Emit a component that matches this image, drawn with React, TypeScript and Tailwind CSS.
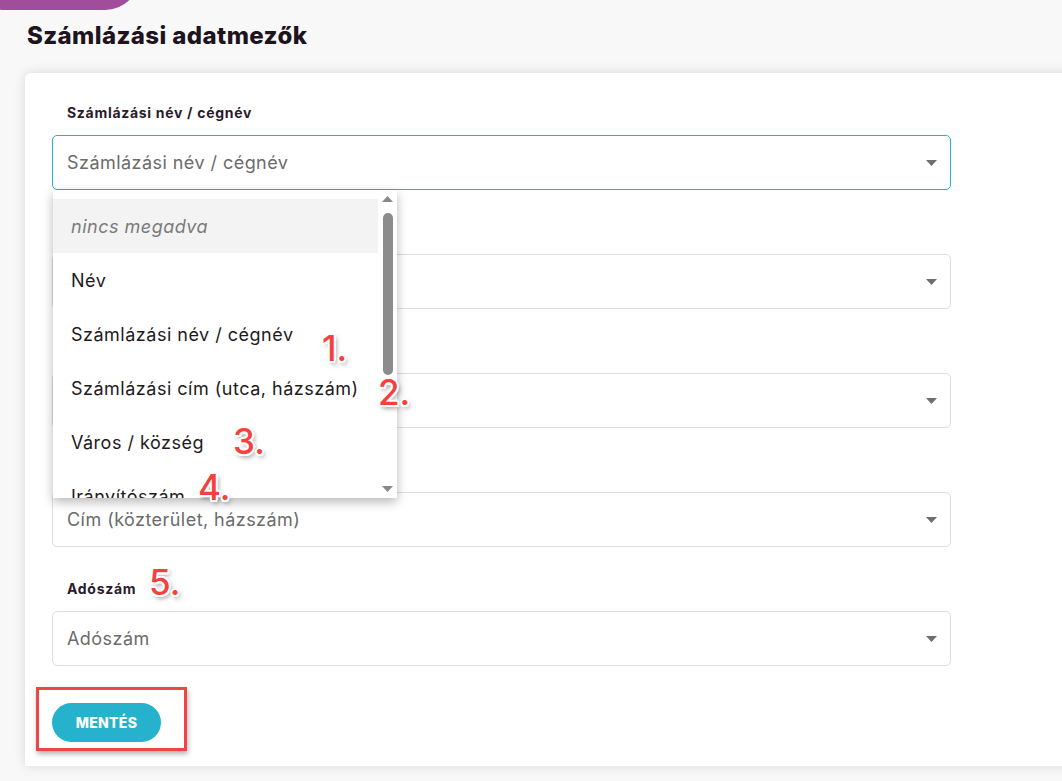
import React from "react";

const font = { fontFamily: "Inter, 'Noto Sans', sans-serif" };

const options = [
  "nincs megadva",
  "Név",
  "Számlázási név / cégnév",
  "Számlázási cím (utca, házszám)",
  "Város / község",
  "Irányítószám",
];

function Caret() {
  return (
    <svg width="11" height="6" viewBox="0 0 11 6" className="shrink-0">
      <path d="M0 0h11L5.5 6z" fill="#6e6e6e" />
    </svg>
  );
}

function Mark({ n, className }: { n: string; className: string }) {
  return (
    <span
      className={`pointer-events-none absolute z-20 text-[35px] font-medium leading-none text-[#f2413f] ${className}`}
      style={{
        fontFamily: "Inter, 'Liberation Sans', sans-serif",
        textShadow:
          "2px 0 0 #fff,-2px 0 0 #fff,0 2px 0 #fff,0 -2px 0 #fff,1.5px 1.5px 0 #fff,-1.5px -1.5px 0 #fff,1.5px -1.5px 0 #fff,-1.5px 1.5px 0 #fff,2px 3px 5px rgba(0,0,0,0.5)",
      }}
    >
      {n}
    </span>
  );
}

function Field({
  label,
  placeholder,
  active,
  children,
}: {
  label?: string;
  placeholder: string;
  active?: boolean;
  children?: React.ReactNode;
}) {
  return (
    <div className="mb-[32px]">
      <div className="h-[20px] pl-[15px] text-[14px] font-bold leading-[20px] tracking-[0.7px] text-[#2b1b2b]">
        {label}
      </div>
      <div className="relative mt-[12px]">
        <div
          className={`flex h-[55px] w-[899px] items-center justify-between rounded-[5px] border pl-[14px] pr-[13px] ${
            active ? "border-[#27b2cc]" : "border-[#dedede]"
          }`}
        >
          <span className="text-[18px] tracking-[0.45px] text-[#6b6b6b]">{placeholder}</span>
          <Caret />
        </div>
        {children}
      </div>
    </div>
  );
}

function Dropdown() {
  return (
    <div className="absolute left-[1px] top-[55px] z-10 flex h-[308px] w-[344px] overflow-hidden bg-white shadow-[0_4px_10px_rgba(0,0,0,0.28)]">
      <div className="flex-1 pt-[9px]">
        {options.map((o, i) => (
          <div
            key={o}
            className={`flex h-[54px] items-center pl-[18px] text-[18px] tracking-[0.5px] ${
              i === 0 ? "bg-[#f3f3f3] italic text-[#7a7a7a]" : "text-[#1e1a1e]"
            }`}
          >
            {o}
          </div>
        ))}
      </div>
      <div className="flex w-[19px] flex-col items-center py-[6px]">
        <svg width="11" height="6" viewBox="0 0 11 6">
          <path d="M0 6h11L5.5 0z" fill="#8a8a8a" />
        </svg>
        <div className="mt-[11px] h-[162px] w-[10px] rounded-full bg-[#8c8c8c]" />
        <div className="flex-1" />
        <svg width="11" height="6" viewBox="0 0 11 6">
          <path d="M0 0h11L5.5 6z" fill="#8a8a8a" />
        </svg>
      </div>
    </div>
  );
}

export default function App() {
  return (
    <div className="relative h-[781px] w-full overflow-hidden bg-[#f8f8f8]" style={font}>
      {/* purple corner blob */}
      <div className="absolute left-[-30px] top-[-60px] h-[70px] w-[170px] rounded-full bg-[#a04e9c]" />

      <div className="pl-[25px] pt-[20px]">
        <h1 className="pl-[2px] text-[24px] font-extrabold leading-[32px] tracking-[0.4px] text-[#1e141e]">
          Számlázási adatmezők
        </h1>

        <div className="mt-[21px] h-[693px] w-[1100px] rounded-tl-[6px] bg-white pl-[27px] pt-[30px] shadow-[0_0_12px_rgba(0,0,0,0.13)]">
          <Field label="Számlázási név / cégnév" placeholder="Számlázási név / cégnév" active>
            <Dropdown />
            <Mark n="1." className="left-[270px] top-[196px]" />
            <Mark n="2." className="left-[326px] top-[240px]" />
            <Mark n="3." className="left-[181px] top-[289px]" />
            <Mark n="4." className="left-[146px] top-[335px]" />
          </Field>
          <Field label="" placeholder="" />
          <Field label="" placeholder="" />
          <Field label="" placeholder="Cím (közterület, házszám)" />
          <div className="relative">
            <Field label="Adószám" placeholder="Adószám" />
            <Mark n="5." className="left-[97px] top-[-14px]" />
          </div>

          <div className="relative mt-[37px]">
            <button className="h-[39px] w-[109px] rounded-full bg-[#26b2cc] text-[14px] font-extrabold tracking-[0.3px] text-white">
              MENTÉS
            </button>
            <div className="pointer-events-none absolute left-[-16px] top-[-16px] h-[64px] w-[151px] border-[3px] border-[#ee4646] shadow-[1px_3px_5px_rgba(0,0,0,0.3)]" />
          </div>
        </div>
      </div>
    </div>
  );
}
